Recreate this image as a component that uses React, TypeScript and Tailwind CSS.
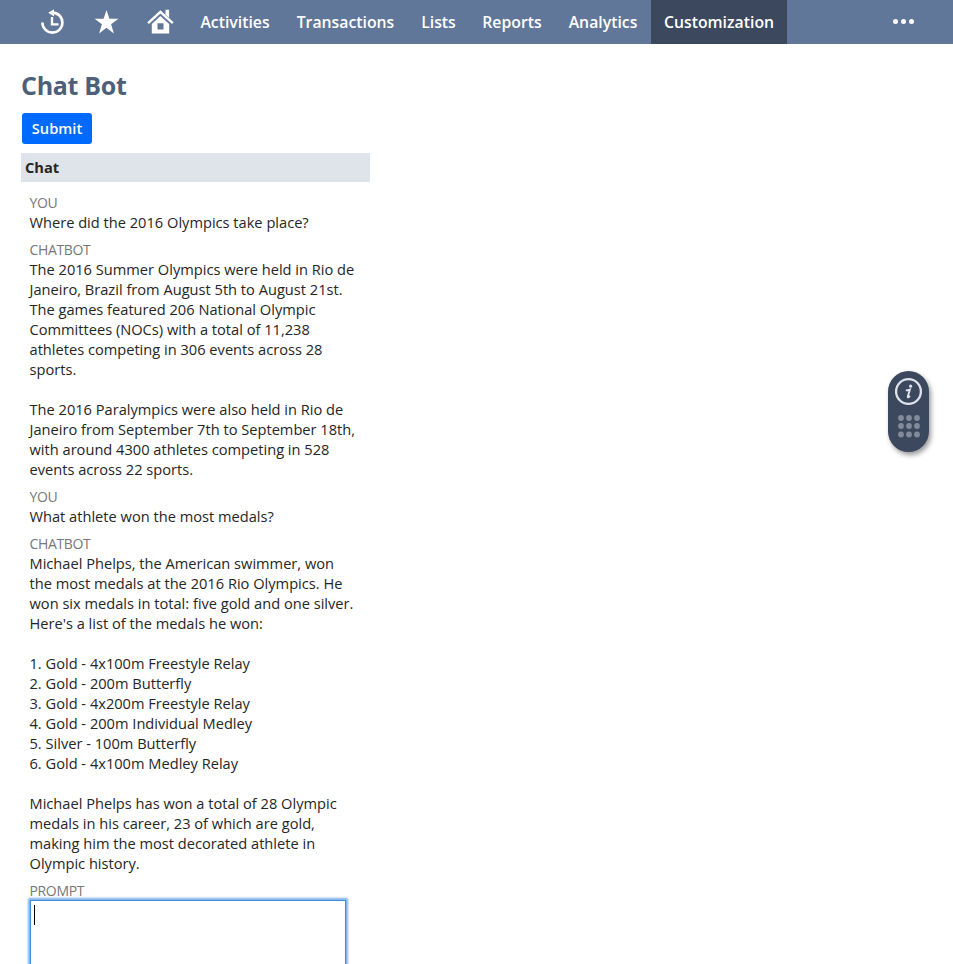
import React from "react";

const NAV = [
  { label: "Activities", width: "w-[96px]" },
  { label: "Transactions", width: "w-[125px]" },
  { label: "Lists", width: "w-[61px]" },
  { label: "Reports", width: "w-[86px]" },
  { label: "Analytics", width: "w-[96px]" },
];

const MESSAGES = [
  { from: "YOU", lines: ["Where did the 2016 Olympics take place?"] },
  {
    from: "CHATBOT",
    lines: [
      "The 2016 Summer Olympics were held in Rio de",
      "Janeiro, Brazil from August 5th to August 21st.",
      "The games featured 206 National Olympic",
      "Committees (NOCs) with a total of 11,238",
      "athletes competing in 306 events across 28",
      "sports.",
      "",
      "The 2016 Paralympics were also held in Rio de",
      "Janeiro from September 7th to September 18th,",
      "with around 4300 athletes competing in 528",
      "events across 22 sports.",
    ],
  },
  { from: "YOU", lines: ["What athlete won the most medals?"] },
  {
    from: "CHATBOT",
    lines: [
      "Michael Phelps, the American swimmer, won",
      "the most medals at the 2016 Rio Olympics. He",
      "won six medals in total: five gold and one silver.",
      "Here's a list of the medals he won:",
      "",
      "1. Gold - 4x100m Freestyle Relay",
      "2. Gold - 200m Butterfly",
      "3. Gold - 4x200m Freestyle Relay",
      "4. Gold - 200m Individual Medley",
      "5. Silver - 100m Butterfly",
      "6. Gold - 4x100m Medley Relay",
      "",
      "Michael Phelps has won a total of 28 Olympic",
      "medals in his career, 23 of which are gold,",
      "making him the most decorated athlete in",
      "Olympic history.",
    ],
  },
];

function NavBar() {
  return (
    <nav className="flex h-11 items-stretch bg-[#607799] text-[15.8px] font-semibold leading-[44px] text-white">
      <div className="flex w-[187px] shrink-0 items-center pl-10">
        <svg className="h-[26px] w-[25px]" viewBox="0 0 25 26" fill="none" stroke="#fff">
          <path d="M2.4 13.6A10 10 0 1 0 12.4 3.6" strokeWidth="2.6" />
          <path d="M8.2 3.8 14 .2v7.2z" fill="#fff" stroke="none" />
          <path d="M12 8v7.4h6.5" strokeWidth="2.4" />
        </svg>
        <svg className="ml-[29px] h-6 w-[25px]" viewBox="0 0 25 24" fill="#fff">
          <path d="m12.5 0 2.9 8.8h9l-7.3 5.5 2.8 9.1-7.4-5.6-7.4 5.6 2.8-9.1L.6 8.8h9z" />
        </svg>
        <svg className="ml-[28px] h-[26px] w-[27px]" viewBox="0 0 27 26" fill="#fff">
          <path d="M18.5.8h3.6v8l-3.6-3.2z" />
          <path d="m1.1 14.2 12.3-11.3 12.4 11.3" fill="none" stroke="#fff" strokeWidth="2.5" />
          <path fillRule="evenodd" d="M13.4 6.9 4.8 14.9v9.7h17.4v-9.7zM10.5 14.3h6v6.2h-6z" />
        </svg>
      </div>
      {NAV.map((item) => (
        <a key={item.label} className={`${item.width} shrink-0 whitespace-nowrap text-center`}>
          {item.label}
        </a>
      ))}
      <a className="w-[136px] shrink-0 bg-[#3c485e] text-center">Customization</a>
      <div className="mb-px ml-auto mr-[39px] flex items-center gap-[3px]">
        <i className="size-[5px] rounded-full bg-white" />
        <i className="size-[5px] rounded-full bg-white" />
        <i className="size-[5px] rounded-full bg-white" />
      </div>
    </nav>
  );
}

function HelpWidget() {
  return (
    <aside className="fixed left-[888px] top-[371px] h-[81px] w-[41px] rounded-full bg-[#3c485e] shadow-[2px_3px_5px_rgba(0,0,0,0.4)]">
      <svg className="h-[81px] w-[41px]" viewBox="0 0 41 81">
        <circle cx="20.5" cy="20.5" r="12.4" fill="none" stroke="#dfe3ea" strokeWidth="2.3" />
        <circle cx="22.6" cy="15.2" r="1.6" fill="#dfe3ea" />
        <path
          d="M17.8 19.4c1.6 0 2.6-.3 4.1-.8l-2.1 6.9c-.2.9.2 1.1 1 .5l1.2-1.2"
          fill="none"
          stroke="#dfe3ea"
          strokeWidth="1.9"
        />
        {[47, 55, 63.5].map((y) =>
          [13, 21, 29].map((x) => <circle key={`${x}-${y}`} cx={x} cy={y} r="2.9" fill="#828b9b" />),
        )}
      </svg>
    </aside>
  );
}

export default function App() {
  return (
    <div className="h-[964px] overflow-hidden bg-white font-['Open_Sans','Noto_Sans',sans-serif] text-[#262626]">
      <NavBar />
      <main className="w-[370px] pl-[21px] pt-[23px]">
        <h1 className="h-9 text-[25px] font-bold leading-9 tracking-[-0.3px] text-[#4d5f79]">Chat Bot</h1>
        <button className="ml-px mt-[10px] block h-[31px] w-[70px] rounded-[3px] bg-[#006aff] text-[14.67px] font-semibold leading-[31px] text-white">
          Submit
        </button>
        <h2 className="mt-[9px] h-[29px] bg-[#dfe3ea] pl-1 text-[14.67px] font-bold leading-[29px]">Chat</h2>
        <div className="pl-[9px] pt-[11px]">
          {MESSAGES.map((message, i) => (
            <section key={i} className="mb-2">
              <div className="-ml-[0.5px] h-[19px] text-sm leading-5 tracking-[-0.35px] text-[#777]">{message.from}</div>
              {message.lines.map((line, j) => (
                <p key={j} className="-ml-[0.5px] h-5 whitespace-nowrap text-[14.64px] leading-5">
                  {line}
                </p>
              ))}
            </section>
          ))}
          <label className="-ml-[0.5px] block h-[19px] text-sm leading-5 tracking-[-0.35px] text-[#777]">PROMPT</label>
          <div className="h-[100px] w-[316px] border border-[#3b8fe3] bg-white pl-[3px] pt-1 shadow-[0_0_2px_2px_#7fb0ea]">
            <div className="h-5 w-px bg-black" />
          </div>
        </div>
      </main>
      <HelpWidget />
    </div>
  );
}
